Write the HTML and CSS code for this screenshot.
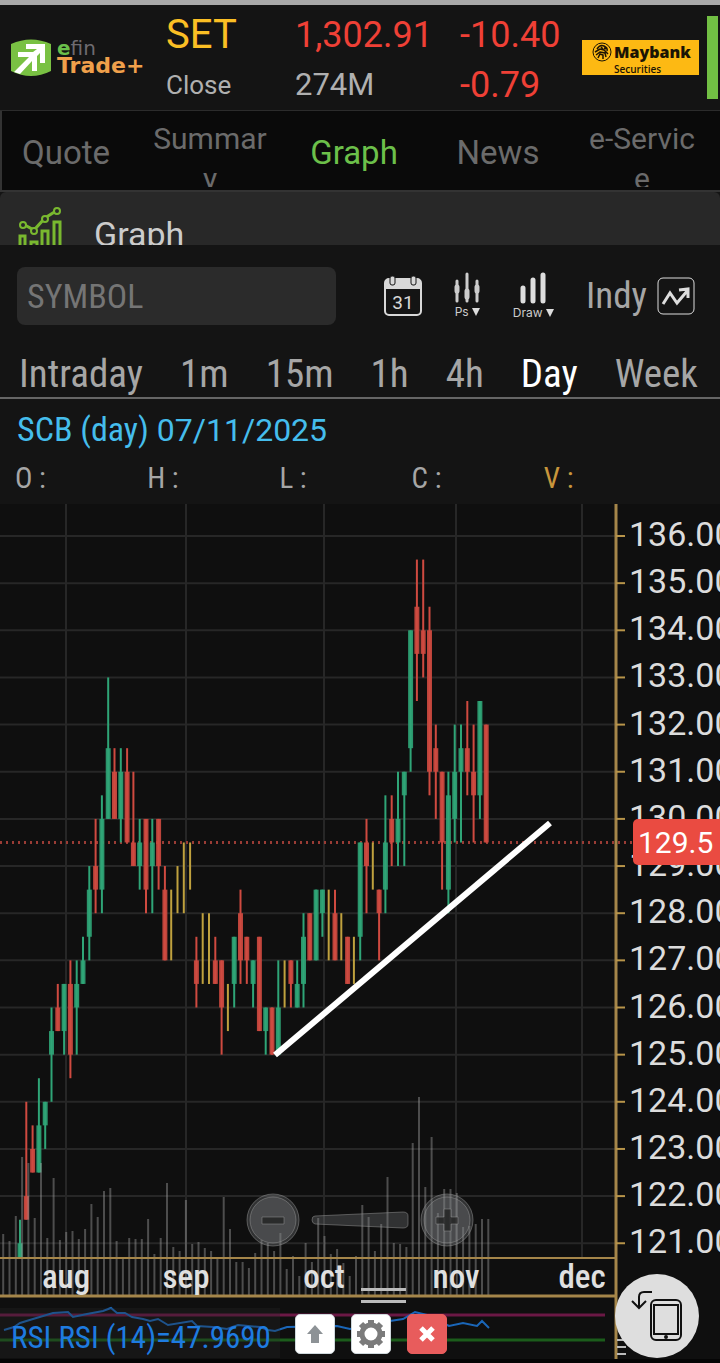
FILE: index.html
```html
<!DOCTYPE html>
<html lang="en">
<head>
<meta charset="UTF-8">
  <meta name="viewport" content="width=device-width, initial-scale=1.0">
  <title>efin Trade+ Graph</title>
  <link rel="stylesheet" href="styles.css">
</head>
<body>
<header class="market">
  <div class="logo">
    <svg width="40" height="38" viewBox="0 0 40 38">
      <path d="M0 5Q20-4 40 5V32Q20 42 0 32Z" fill="#79c143"/>
      <path d="M15 5H34V24H29V14L26 17V32H21V22L9 35L3 33L18 18H7V13H22L26 10H15Z" fill="#fff"/>
    </svg>
    <div class="logo-text">
      <span class="efin"><b>e</b>fin</span>
      <span class="trade">Trade+</span>
    </div>
  </div>
  <div class="quote name"><span>SET</span><small>Close</small></div>
  <div class="quote index"><span>1,302.91</span><small>274M</small></div>
  <div class="quote change"><span>-10.40</span><span>-0.79</span></div>
  <div class="broker">
    <svg width="20" height="20" viewBox="0 0 20 20" fill="none" stroke="#1b1405">
      <circle cx="10" cy="10" r="9"/>
      <path stroke-width="1.5" d="M5 7Q8 2 12 4Q16 6 15 9M3 10L8 7L12 8L16 12M4 13L8 10L13 11L14 15M6 16L8 12L11 13V17M9 5L11 7M12 6L14 7"/>
    </svg>
    <b>Maybank</b>
    <small>Securities</small>
  </div>
  <div class="strip"></div>
</header>

<nav class="tabs">
  <div class="tabs-row">
    <a href="#quote">Quote</a>
    <a href="#summary" class="long">Summary</a>
    <a href="#graph" class="active">Graph</a>
    <a href="#news">News</a>
    <a href="#eservice" class="long">e-Service</a>
  </div>
</nav>

<div class="title-bar">
  <svg width="44" height="46" viewBox="0 0 44 46" fill="none" stroke="#79b82f" stroke-width="3">
    <path d="M5 17L16 23L27 11L38 4M2 46V29H7V46M13 46V35H19V46M24 46V24H30V46M36 46V15H42V46"/>
    <g fill="#282828" stroke-width="2"><circle cx="5" cy="18" r="3"/><circle cx="16" cy="24" r="3"/><circle cx="27" cy="12" r="3"/><circle cx="39" cy="4" r="3"/></g>
  </svg>
  <h1>Graph</h1>
</div>

<div class="toolbar">
  <input type="text" class="symbol" placeholder="SYMBOL" aria-label="Symbol">
  <div class="tools">
    <button class="tool calendar" aria-label="Calendar">
      <svg width="38" height="42" viewBox="0 0 38 42">
        <rect x="1" y="4" width="36" height="36" rx="4" fill="none" stroke="#d8d8d8" stroke-width="2"/>
        <path d="M1 14V8Q1 4 5 4H33Q37 4 37 8V14Z" fill="#d8d8d8"/>
        <g fill="#d8d8d8" stroke="#141414"><rect x="6" y="1" width="5" height="9" rx="2"/><rect x="27" y="1" width="5" height="9" rx="2"/></g>
        <text x="19" y="34" text-anchor="middle" class="cal-text">31</text>
      </svg>
    </button>
    <button class="tool ps">
      <svg width="26" height="32" viewBox="0 0 26 32" stroke="#ccc" stroke-linecap="round">
        <path stroke-width="3" d="M3 9V29M13 2V29M23 9V29"/><path stroke-width="5" d="M3 15V19M13 19V25M23 15V19"/>
      </svg>
      <span>Ps<i></i></span>
    </button>
    <button class="tool draw">
      <svg width="28" height="34" viewBox="0 0 28 34" stroke="#ddd" stroke-width="5" stroke-linecap="round">
        <path d="M4 17V30M14 9V30M24 4V30"/>
      </svg>
      <span>Draw<i></i></span>
    </button>
    <button class="tool indy">Indy
      <svg width="38" height="38" viewBox="0 0 38 38" fill="none" stroke="#ddd">
        <rect x="1" y="1" width="36" height="36" rx="5"/>
        <path stroke-width="3" d="M6 27L13 16L20 26L31 13M22 13L31 12V21"/>
      </svg>
    </button>
  </div>
</div>

<div class="periods">
  <button>Intraday</button>
  <button>1m</button>
  <button>15m</button>
  <button>1h</button>
  <button>4h</button>
  <button class="active">Day</button>
  <button>Week</button>
</div>

<p class="symbol-info"><span>SCB (day)</span> 07/11/2025</p>
<div class="ohlc">
  <span>O :</span><span>H :</span><span>L :</span><span>C :</span><span class="vol">V :</span>
</div>

<main>
  <div class="chart">
    <svg id="chart" viewBox="0 0 720 795"></svg>
    <div class="zoom">
      <button aria-label="Zoom out"><svg width="54" height="54" viewBox="0 0 54 54"><circle cx="27" cy="27" r="26"/><circle cx="27" cy="27" r="23"/><path d="M16 24H38V31H16Z" class="sign"/></svg></button>
      <svg width="98" height="18" viewBox="0 0 98 18"><path d="M4 5L92 1Q97 1 97 5V13Q97 17 92 17L4 13Q1 12 1 9Q1 5 4 5Z"/></svg>
      <button aria-label="Zoom in"><svg width="54" height="54" viewBox="0 0 54 54"><circle cx="27" cy="27" r="26"/><circle cx="27" cy="27" r="23"/><path d="M24 16H31V24H38V31H31V38H24V31H16V24H24Z" class="sign"/></svg></button>
    </div>
    <div class="handle"></div>
  </div>

  <div class="rsi">
    <svg viewBox="0 0 720 60">
      <path d="M0 16H605" stroke="#6b1845" stroke-width="3"/>
      <path d="M0 41H605" stroke="#1b5c1b" stroke-width="3"/>
      <path d="M4 31L14 28L20 24L33 20L53 14L68 13L73 18L87 15L103 12L111 9L117 14L125 14L132 18L143 20L150 22L158 20L168 26L192 22L197 27L213 28L227 30L238 26L260 28L268 31L275 32L287 28L337 27L350 30L390 22L403 20L415 13L427 16L449 27L463 24L477 27L482 22L489 29" fill="none" stroke="#1a66b8" stroke-width="2"/>
      <path d="M616 0V60" stroke="#a5864a" stroke-width="3"/>
      <path d="M617 41H626M617 48H626M617 55H626" stroke="#bbb" stroke-width="2"/>
    </svg>
    <span class="rsi-label">RSI RSI (14)=47.9690</span>
    <div class="rsi-tools">
      <button aria-label="Move up"><svg width="20" height="20" viewBox="0 0 20 20"><path d="M10 1L18 10H14V19H6V10H2Z" fill="#8d9296"/></svg></button>
      <button aria-label="Settings"><svg width="30" height="30" viewBox="0 0 30 30" fill="none" stroke="#7b7b7b"><circle cx="15" cy="15" r="9" stroke-width="5"/><path stroke-width="6" d="M15 1V5M15 25V29M1 15H5M25 15H29M5 5L8 8M22 22L25 25M25 5L22 8M8 22L5 25"/></svg></button>
      <button class="close" aria-label="Close"><svg width="18" height="18" viewBox="0 0 18 18" stroke="#fff" stroke-width="5"><path d="M3 3L15 15M15 3L3 15"/></svg></button>
    </div>
  </div>
  <button class="rotate" aria-label="Rotate screen">
    <svg width="84" height="84" viewBox="0 0 84 84" fill="none" stroke="#111" stroke-width="2">
      <path d="M37 18H29Q24 18 24 23V34M17 27L24 34L31 27"/>
      <rect x="36" y="26" width="30" height="40" rx="5"/><rect x="39" y="31" width="24" height="29"/>
      <circle cx="51" cy="63" r="1"/>
    </svg>
  </button>
</main>

<script>
  const GREEN = '#2fa577';
  const RED = '#cf4a40';
  const YELLOW = '#bfa13e';
  const STEP = 6.3;

  // color, high, body top, body bottom, low
  const candles = [
    ['g',121.5,121,120.7,120.7],['r',124,122,121.5,121.5],['r',123.5,123,122.5,122.5],['g',124.5,123.5,122.5,122.5],
    ['g',124,124,123.5,123],['g',126,125.5,125,124],['r',126.5,126,125.5,125.5],['g',126.5,126.5,125.5,125],
    ['r',127,126.5,125,124.5],['g',127,126.5,126,125],['g',127.5,127,126.5,126.5],['g',129,128.5,127.5,127],
    ['r',130,129,128.5,128],['g',130.5,130,128.5,128],['g',133,131.5,130,130],['r',131.5,131,130,130],
    ['g',131.5,131,130,129.5],['r',131.5,131,129.5,129.5],['r',131,129.5,129,129],['g',130,129.5,129,128.5],
    ['r',130,130,128.5,128],['g',130,129.5,129,128],['r',130,130,129,128.5],['r',129,128.5,127,127],
    ['y',128.5,0,0,127],['y',129,0,0,128],['y',129.5,0,0,128],['y',129.5,0,0,128.5],
    ['r',127.5,127,126.5,126],['y',128,0,0,126.5],['y',128,0,0,126.5],['r',127.5,127,126.5,126.5],
    ['r',127,127,126,125],['y',126.5,0,0,125.5],['g',127.5,127.5,126.5,126],['r',128.5,128,127,126.5],
    ['r',127.5,127.5,127,126.5],['g',127,127,126.5,126],['r',127.5,127.5,125.5,125.5],['g',126,126,125.5,125],
    ['r',126,126,125,125],['g',127,126,125,125],['y',127,0,0,126],['r',127,127,126.5,126],
    ['g',127,126.5,126,126],['g',128,127.5,126.5,126],['r',128,128,127,127],['g',128.5,128.5,127,127],
    ['g',128.5,128.5,128,127.5],['y',128.5,0,0,127],['r',128.5,128,127,127],['y',128,0,0,127],
    ['r',127.5,127.5,126.5,126.5],['y',127.5,0,0,126.5],['g',129.5,129.5,127.5,127],['r',130,129.5,129,128],
    ['y',129.5,0,0,128.5],['r',128.5,128.5,128,127],['g',130.5,129.5,128.5,128],['r',130.5,130,129.5,129],
    ['g',131,130,129.5,129],['g',131,131,130.5,129],['g',134,134,131.5,131],['r',135.5,134.5,133.5,132.5],
    ['r',135.5,134,133.5,133],['r',134.5,134,131,130.5],['r',132,131.5,131,130],['r',131,131,129.5,128.5],
    ['g',131,130.5,128.5,128],['g',132,131,130,129.5],['g',132,131.5,131,129.5],['r',132.5,131.5,131,130.5],
    ['r',132,131,130.5,129.5],['g',132.5,132.5,130.5,130],['r',132,132,129.5,129.5]
  ];

  const volumes = [61,54,79,138,132,77,132,57,117,55,63,64,56,66,91,78,104,107,54,37,57,56,56,76,41,57,112,48,44,95,
    51,53,47,44,37,98,66,33,33,27,42,55,52,44,62,26,39,19,52,33,77,59,41,46,32,19,39,90,78,44,71,118,52,51,48,
    152,198,108,158,82,106,106,102,68,69,71,76,76];

  const months = [[66, 'aug'], [186, 'sep'], [324, 'oct'], [456, 'nov'], [582, 'dec']];

  function py(price) {
    return 32 + (136 - price) * 47.15;
  }

  function line(x1, y1, x2, y2, color, width, extra) {
    return `<line x1="${x1}" y1="${y1}" x2="${x2}" y2="${y2}" stroke="${color}" stroke-width="${width}" ${extra || ''}/>`;
  }

  function renderChart() {
    let out = '';

    for (const [x] of months) {
      out += line(x, 0, x, 754, '#272727', 2);
    }
    for (let p = 136; p >= 121; p--) {
      out += line(0, py(p), 616, py(p), '#272727', 2);
    }
    out += line(0, py(129.5), 634, py(129.5), '#9a3c35', 3, 'stroke-dasharray="2 4"');

    candles.forEach(([type, high, top, bottom, low], i) => {
      const x = 20 + i * STEP;
      const color = type === 'g' ? GREEN : type === 'r' ? RED : YELLOW;
      out += line(x, py(high), x, py(low), color, 2);
      if (type !== 'y') {
        out += line(x, py(top), x, py(bottom), color, 5, 'opacity="0.9"');
      }
    });

    volumes.forEach((v, i) => {
      const x = 3.2 + i * STEP;
      out += line(x, 791 - v, x, 791, '#aaa', 2, 'opacity="0.4"');
    });

    // axes
    out += line(0, 754, 616, 754, '#a5864a', 2);
    out += line(0, 792, 616, 792, '#a5864a', 3);
    out += line(616, 0, 616, 795, '#a5864a', 3);
    for (let p = 136; p >= 121; p--) {
      out += line(616, py(p), 625, py(p), '#b8954a', 2);
      out += `<text class="price" x="629" y="${py(p) + 10}">${p.toFixed(2)}</text>`;
    }
    for (const [x, name] of months) {
      out += `<text class="month" x="${x}" y="784">${name}</text>`;
    }

    out += line(275, 551, 550, 319, '#fff', 6);

    // last price
    out += '<rect x="633" y="315" width="92" height="46" rx="5" fill="#ea4b41"/>';
    out += '<text class="last" x="638" y="349">129.5</text>';
    document.getElementById('chart').innerHTML = out;
  }

  renderChart();
</script>
</body>
</html>
```
FILE: styles.css
```css
* {
  box-sizing: border-box;
}

body {
  margin: 0;
  border-top: 5px solid #a9a9a9;
  background: #141414;
  color: #a6a6a6;
  font-family: Roboto, Arial, sans-serif;
  overflow-x: hidden;
}

button {
  padding: 0;
  border: 0;
  background: none;
  color: inherit;
  font: inherit;
  cursor: pointer;
}

svg {
  display: block;
}

/* market header */
.market {
  display: grid;
  grid-template-columns: 155px 129px 165px 1fr 117px 19px;
  align-items: center;
  height: 106px;
  padding: 0 2px 0 11px;
  border-bottom: 1px solid #2c2c2c;
}

.logo {
  display: flex;
  gap: 6px;
}

.logo-text {
  display: flex;
  flex-direction: column;
  font-family: "DejaVu Sans", sans-serif;
  line-height: 18px;
}

.efin {
  color: #6e6b70;
  font-size: 20px;
}

.efin b {
  color: #6abf4b;
}

.trade {
  color: #f0a04b;
  font-size: 22px;
  font-weight: bold;
}

.quote {
  display: flex;
  flex-direction: column;
  padding-top: 4px;
  font-size: 36px;
  line-height: 50px;
}

.quote small {
  color: #b0b0b0;
  font-size: 31px;
}

.name {
  color: #fbbf24;
  font-size: 40px;
}

.name small {
  font-size: 26px;
}

.index,
.change {
  color: #ef4036;
}

.broker {
  display: grid;
  grid-template-columns: 20px 1fr;
  column-gap: 2px;
  height: 35px;
  padding: 2px 8px 0 10px;
  background: #fdb913;
  color: #1b1405;
  font-family: "Open Sans", sans-serif;
}

.broker b {
  font-size: 16px;
  font-weight: 800;
  line-height: 20px;
}

.broker small {
  grid-column: 2;
  font-size: 10px;
  font-weight: 600;
  line-height: 12px;
}

.strip {
  height: 83px;
  margin-left: 8px;
  background: #72bf44;
}

/* tabs */
.tabs {
  height: 81px;
  border-left: 2px solid #333;
  border-bottom: 2px solid #333;
  background: #0a0a0a;
  overflow: hidden;
}

.tabs-row {
  display: grid;
  grid-template-columns: repeat(5, 1fr);
  margin: 0 6px 0 -8px;
  height: 76px;
  overflow: hidden;
}

.tabs a {
  padding: 0 15px;
  color: #6b6b6b;
  font-size: 33px;
  line-height: 84px;
  text-align: center;
  text-decoration: none;
}

.tabs .long {
  padding-top: 8px;
  font-size: 30px;
  line-height: 40px;
  word-break: break-all;
}

.tabs .active {
  color: #6cc04a;
}

.title-bar {
  display: flex;
  gap: 32px;
  height: 53px;
  padding: 15px 18px 0;
  border-radius: 6px 6px 0 0;
  background: #282828;
  overflow: hidden;
}

.title-bar h1 {
  margin: 0;
  color: #ccc;
  font-size: 34px;
  font-weight: normal;
  line-height: 54px;
}

/* toolbar */
.toolbar,
.periods,
.ohlc {
  font-family: "Roboto Condensed", "Liberation Sans Narrow", Roboto, sans-serif;
}

.toolbar {
  display: flex;
  align-items: center;
  gap: 48px;
  height: 102px;
  padding: 0 25px 0 17px;
}

.symbol {
  width: 47%;
  height: 58px;
  flex-shrink: 0;
  padding: 0 10px;
  border: 0;
  border-radius: 8px;
  background: #2b2b2b;
  color: #ccc;
  font: inherit;
  font-size: 34px;
}

.symbol::placeholder {
  color: #757575;
  opacity: 1;
}

.tools {
  display: flex;
  flex: 1;
  align-items: center;
  justify-content: space-between;
}

.tool {
  display: flex;
  flex-direction: column;
  align-items: center;
  color: #ccc;
  font-family: Inter, sans-serif;
  font-size: 12px;
  line-height: 16px;
}

.tool i {
  display: inline-block;
  margin-left: 3px;
  border: 4px solid transparent;
  border-top: 8px solid #ddd;
  border-bottom: 0;
}

.cal-text {
  fill: #d8d8d8;
  font: 19px Roboto, sans-serif;
}

.indy {
  flex-direction: row;
  gap: 10px;
  color: #a6a6a6;
  font-family: inherit;
  font-size: 37px;
  line-height: 44px;
}

.periods {
  display: flex;
  justify-content: space-between;
  height: 52px;
  padding: 0 22px 0 19px;
  border-bottom: 2px solid #666;
  font-size: 39px;
  line-height: 54px;
}

.periods .active {
  color: #fff;
}

.symbol-info {
  margin: 0;
  padding: 0 17px;
  color: #45bdec;
  font-size: 32px;
  line-height: 60px;
}

.symbol-info span {
  font-family: "Roboto Condensed", "Liberation Sans Narrow", Roboto, sans-serif;
  font-size: 34px;
}

.ohlc {
  display: grid;
  grid-template-columns: repeat(5, 1fr);
  height: 44px;
  padding: 0 44px 0 15px;
  font-size: 29px;
  line-height: 36px;
}

.ohlc .vol {
  color: #c8963c;
}

/* chart */
main {
  position: relative;
  background: #0f0f0f;
  border-bottom: 5px solid #050505;
}

.chart,
.rsi {
  position: relative;
}

.chart > svg,
.rsi > svg {
  width: 100%;
  height: auto;
}

.price,
.last {
  fill: #dcdcdc;
  font-size: 34px;
}

.last {
  fill: #fff;
  font-size: 30px;
}

.month {
  fill: #e0e0e0;
  font-family: "Roboto Condensed", "Liberation Sans Narrow", Roboto, sans-serif;
  font-size: 33px;
  font-weight: 500;
  text-anchor: middle;
}

.zoom {
  position: absolute;
  left: 0;
  right: 0;
  bottom: 52px;
  display: flex;
  justify-content: center;
  align-items: center;
  gap: 11px;
}

.zoom svg {
  fill: rgba(130, 132, 135, 0.3);
  stroke: rgba(150, 150, 150, 0.5);
}

.zoom .sign {
  fill: rgba(30, 30, 30, 0.7);
}

.handle {
  position: absolute;
  left: 361px;
  bottom: -4px;
  width: 45px;
  height: 15px;
  border-top: 3px solid #bbb;
  border-bottom: 3px solid #bbb;
}

.rsi-label {
  position: absolute;
  left: 0;
  top: 9px;
  height: 50px;
  padding: 0 9px 0 11px;
  background: rgba(40, 40, 40, 0.3);
  color: #1e7be0;
  font-family: "Roboto Condensed", "Liberation Sans Narrow", Roboto, sans-serif;
  font-size: 31px;
  line-height: 60px;
}

.rsi-tools {
  position: absolute;
  left: 295px;
  top: 15px;
  display: flex;
  gap: 16px;
}

.rsi-tools button {
  display: flex;
  align-items: center;
  justify-content: center;
  width: 40px;
  height: 40px;
  border: 1px solid #cfd8dc;
  border-radius: 5px;
  background: #fff;
}

.rsi-tools .close {
  border-color: #e85c5c;
  background: #e85c5c;
}

.rotate {
  position: absolute;
  right: 21px;
  bottom: 1px;
  border-radius: 50%;
  background: #dedede;
}
```
